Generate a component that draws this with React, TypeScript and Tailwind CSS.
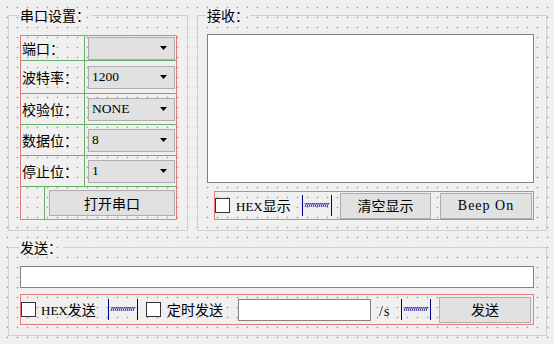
const dots =
  'bg-[#f0f0f0] bg-[radial-gradient(circle_at_7.5px_7.5px,#a4a4a4_0.8px,transparent_1.1px)] bg-size-[10px_10px]';

// Qt Designer style spring: short slanted strokes between two bars
const springPath = (() => {
  let d = '';
  for (let x = 3; x <= 26; x += 2) d += `M${x} 12L${x + 1.5} 8`;
  return d;
})();

const Spacer = () => (
  <svg width="30" height="21" viewBox="0 0 30 21" className="shrink-0">
    <path d="M0.5 0v21M29.5 0v21" stroke="#00008b" strokeWidth="1" />
    <path d="M2 8.5h26" stroke="#6a6ac8" strokeWidth="0.6" />
    <path d={springPath} stroke="#1a1aa0" strokeWidth="0.9" fill="none" />
  </svg>
);

const Latin = ({ children, size = 'text-[13px]' }: { children: React.ReactNode; size?: string }) => (
  <span className={`font-['Liberation_Serif',serif] ${size}`}>{children}</span>
);

const Combo = ({ value }: { value?: string }) => (
  <div className="flex h-[23px] w-[87px] items-center justify-between border border-[#adadad] bg-[#e1e1e1] pl-[3px] pr-[7px]">
    <span className="font-['Liberation_Serif',serif] text-[13.5px] leading-none">{value}</span>
    <svg width="7" height="4" viewBox="0 0 7 4">
      <path d="M0 0h7L3.5 4z" fill="#000" />
    </svg>
  </div>
);

const Button = ({ w, children }: { w: string; children: React.ReactNode }) => (
  <button
    type="button"
    className={`flex h-[26px] ${w} shrink-0 items-center justify-center border border-[#adadad] bg-[#e1e1e1] text-[14px]`}
  >
    {children}
  </button>
);

const Check = ({ className = '' }: { className?: string }) => (
  <span className={`h-[15px] w-[15px] shrink-0 border border-[#333333] bg-white ${className}`} />
);

const Legend = ({ children }: { children: React.ReactNode }) => (
  <legend className="-ml-[1px] px-[1px] text-[14px] leading-[16px]">{children}</legend>
);

const rows = [
  { label: '端口：', value: '', h: 'h-[25px]' },
  { label: '波特率：', value: '1200', h: 'h-[33px]' },
  { label: '校验位：', value: 'NONE', h: 'h-[31px]' },
  { label: '数据位：', value: '8', h: 'h-[31px]' },
  { label: '停止位：', value: '1', h: 'h-[31px]' },
];

export default function App() {
  return (
    <div
      className={`h-[344px] w-[554px] overflow-hidden pl-[8px] pt-[7px] text-black font-['Noto_Sans_CJK_SC',sans-serif] ${dots}`}
    >
      <div className="flex gap-[9px]">
        {/* 串口设置 */}
        <fieldset className="h-[224px] w-[180px] border border-[#d0d0d0] pl-[11px] pt-[12px]">
          <Legend>串口设置：</Legend>
          <div className="w-[157px] border border-[#e27c7c]">
            {rows.map((r) => (
              <div key={r.label} className={`flex ${r.h} border-b border-[#6ab06a]`}>
                <div className="flex w-[64px] items-center border-r border-[#6ab06a] pl-[1px] text-[14px]">
                  {r.label}
                </div>
                <div className="flex items-center pl-[3px]">
                  <Combo value={r.value} />
                </div>
              </div>
            ))}
            <div className="flex h-[32px]">
              <div className="w-[24px] border-r border-[#6ab06a]" />
              <div className="flex items-center pl-[4px]">
                <Button w="w-[126px]">打开串口</Button>
              </div>
            </div>
          </div>
        </fieldset>

        {/* 接收 */}
        <fieldset className="h-[224px] w-[350px] border border-[#d0d0d0] pl-[9px] pt-[11px]">
          <Legend>接收：</Legend>
          <div className="h-[149px] w-[327px] border border-[#828282] bg-white" />
          <div className="ml-[7px] mt-[8px] flex h-[29px] w-[320px] items-center border border-[#e27c7c]">
            <Check />
            <span className="ml-[6px] w-[56px] shrink-0 whitespace-nowrap text-[14px]">
              <Latin>HEX</Latin>显示
            </span>
            <span className="ml-[10px]">
              <Spacer />
            </span>
            <span className="ml-[8px]">
              <Button w="w-[91px]">清空显示</Button>
            </span>
            <span className="ml-[9px]">
              <Button w="w-[92px]">
                <Latin size="text-[14px] tracking-[1px]">Beep On</Latin>
              </Button>
            </span>
          </div>
        </fieldset>
      </div>

      {/* 发送 */}
      <fieldset className="mt-[8px] h-[97px] w-[539px] border border-[#d0d0d0] pl-[11px] pt-[11px]">
        <Legend>发送：</Legend>
        <div className="h-[22px] w-[514px] border border-[#828282] bg-white" />
        <div className="mt-[6px] flex h-[31px] w-[514px] items-center border border-[#e27c7c]">
          <Check />
          <span className="ml-[5px] w-[56px] shrink-0 whitespace-nowrap text-[14px]">
            <Latin>HEX</Latin>发送
          </span>
          <span className="ml-[11px]">
            <Spacer />
          </span>
          <Check className="ml-[8px]" />
          <span className="ml-[6px] w-[59px] shrink-0 whitespace-nowrap text-[14px]">定时发送</span>
          <div className="ml-[12px] h-[22px] w-[133px] shrink-0 border border-[#828282] bg-white" />
          <span className="ml-[8px] w-[16px] shrink-0 whitespace-nowrap">
            <Latin size="text-[14px] tracking-[1px]">/s</Latin>
          </span>
          <span className="ml-[6px]">
            <Spacer />
          </span>
          <span className="ml-[8px]">
            <Button w="w-[92px]">发送</Button>
          </span>
        </div>
      </fieldset>
    </div>
  );
}
